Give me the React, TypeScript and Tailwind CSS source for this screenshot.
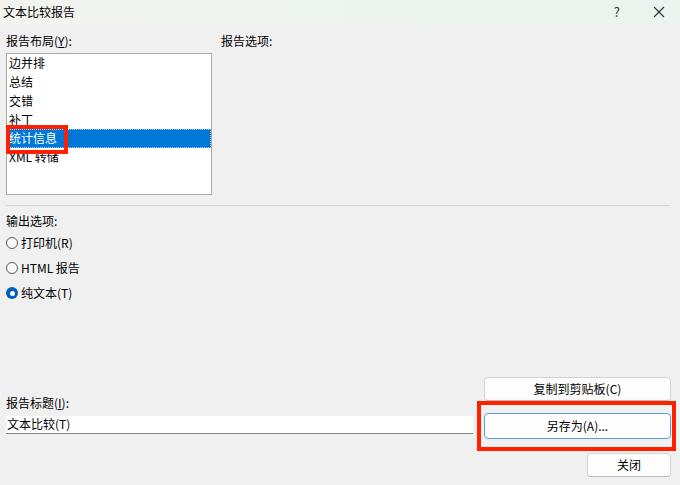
import React from "react";

const FONT = { fontFamily: '"Noto Sans CJK SC", "Microsoft YaHei", sans-serif' };

function Radio({ checked, label }: { checked?: boolean; label: React.ReactNode }) {
  return (
    <div className="h-[25px] flex items-center">
      {checked ? (
        <span className="w-[12px] h-[12px] rounded-full bg-[#005fb8] flex items-center justify-center">
          <span className="w-[5px] h-[5px] rounded-full bg-white" />
        </span>
      ) : (
        <span className="w-[12px] h-[12px] rounded-full border border-[#5a5a5a] bg-[#f7f7f7]" />
      )}
      <span className="ml-[3px] text-[12px] leading-[16px] text-black">{label}</span>
    </div>
  );
}

export default function App() {
  const items = ["边并排", "总结", "交错", "补丁", "统计信息", "XML 转储"];
  return (
    <div
      className="relative w-[680px] h-[485px] bg-[#f0f0f0] overflow-hidden flex flex-col text-black"
      style={FONT}
    >
      {/* title bar */}
      <div className="h-[24px] flex items-center bg-gradient-to-r from-[#f3f4ef] to-[#e8f4ed] pl-[3px]">
        <span className="text-[12px] leading-[16px]">文本比较报告</span>
        <div className="flex-1" />
        <span className="text-[13px] leading-[16px] text-[#333] mr-[33px]">?</span>
        <svg width="12" height="12" viewBox="0 0 12 12" className="mr-[15px]">
          <path d="M1 1 L11 11 M11 1 L1 11" stroke="#333" strokeWidth="1.1" />
        </svg>
      </div>

      {/* body */}
      <div className="flex flex-col pl-[6px] pr-[9px] pt-[9px]">
        <div className="flex">
          <div className="w-[206px] flex flex-col">
            <div className="text-[12px] leading-[16px]">
              报告布局(<span className="underline">Y</span>):
            </div>
            <div className="mt-[4px] h-[142px] bg-white border border-[#a8a8a8] flex flex-col">
              {items.map((t, i) =>
                i === 4 ? (
                  <div
                    key={t}
                    className="h-[18.75px] flex items-center pl-[1px] bg-[#0078d7] text-white border border-dotted border-[#a9cdee] text-[12px] leading-[16px]"
                  >
                    {t}
                  </div>
                ) : (
                  <div key={t} className="h-[18.75px] flex items-center pl-[2px] text-[12px] leading-[16px]">
                    {t}
                  </div>
                )
              )}
            </div>
          </div>
          <div className="ml-[9px] text-[12px] leading-[16px]">报告选项:</div>
        </div>

        <div className="mt-[10px] h-px bg-[#d4d4d4] mr-[1px]" />

        <div className="mt-[7px] text-[12px] leading-[16px]">输出选项:</div>
        <div className="mt-[1.5px] flex flex-col">
          <Radio label="打印机(R)" />
          <Radio label="HTML 报告" />
          <Radio checked label="纯文本(T)" />
        </div>

        <div className="mt-[71px] flex">
          <div className="w-[467px] flex flex-col pt-[18px]">
            <div className="text-[12px] leading-[16px]">
              报告标题(<span className="underline">I</span>):
            </div>
            <div className="mt-[5px] h-[18px] bg-white border-b border-[#8a8a8a] flex items-center pl-[1px] text-[12px] leading-[16px]">
              文本比较(T)
            </div>
          </div>
          <div className="ml-[11px] w-[187px] flex flex-col items-end">
            <button className="w-full h-[24px] rounded-[4px] bg-[#fdfdfd] border border-[#d3d3d3] border-b-[#b8b8b8] text-[12px] leading-[16px] flex items-center justify-center">
              复制到剪贴板(C)
            </button>
            <button className="mt-[12px] w-full h-[26px] rounded-[4px] bg-[#fdfdfd] border border-[#5a9fd8] text-[12px] leading-[16px] flex items-center justify-center">
              另存为(A)...
            </button>
            <button className="mt-[14px] w-[84px] h-[24px] rounded-[4px] bg-[#fdfdfd] border border-[#d3d3d3] border-b-[#b8b8b8] text-[12px] leading-[16px] flex items-center justify-center">
              关闭
            </button>
          </div>
        </div>
      </div>

      {/* red annotation boxes */}
      <div className="absolute left-[6px] top-[125px] w-[62px] h-[29px] border-[4px] border-[#ff2000]" />
      <div className="absolute left-[477px] top-[401px] w-[199px] h-[50px] border-[4px] border-[#ff2000]" />
    </div>
  );
}
